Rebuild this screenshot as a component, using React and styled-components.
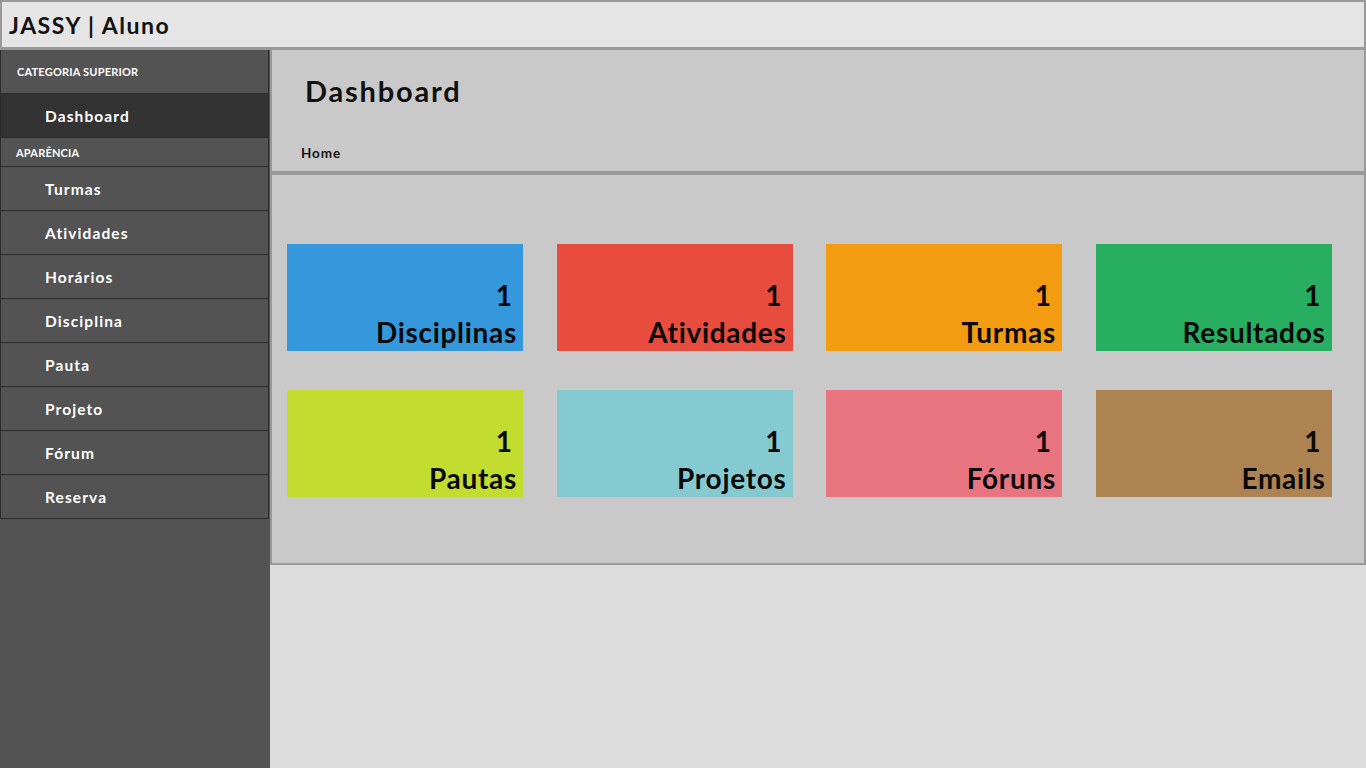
import React from 'react';
import styled, { createGlobalStyle } from 'styled-components';

const GlobalStyle = createGlobalStyle`
  html, body {
    margin: 0;
    padding: 0;
    height: 100%;
  }
  body {
    font-family: Lato, "Open Sans", "Liberation Sans", sans-serif;
    background: #dcdcdc;
  }
  * {
    box-sizing: border-box;
  }
`;

const menu = ['Turmas', 'Atividades', 'Horários', 'Disciplina', 'Pauta', 'Projeto', 'Fórum', 'Reserva'];

const cards = [
  { label: 'Disciplinas', color: '#3598dc' },
  { label: 'Atividades', color: '#e74c3e' },
  { label: 'Turmas', color: '#f39c12' },
  { label: 'Resultados', color: '#27ae61' },
  { label: 'Pautas', color: '#c2dc30' },
  { label: 'Projetos', color: '#85cad1' },
  { label: 'Fóruns', color: '#e87480' },
  { label: 'Emails', color: '#ae8352' },
];

const Page = styled.div`
  display: flex;
  flex-direction: column;
  width: 1366px;
  height: 768px;
  overflow: hidden;
`;

const TopBar = styled.header`
  height: 50px;
  flex-shrink: 0;
  background: #e5e5e5;
  border: 2px solid #999;
  border-bottom-width: 3px;
  display: flex;
  align-items: center;
  padding-left: 7px;
  font-size: 23px;
  font-weight: 700;
  color: #111;
  letter-spacing: 1.5px;
`;

const Body = styled.div`
  flex: 1;
  display: flex;
  min-height: 0;
`;

const Sidebar = styled.nav`
  width: 270px;
  flex-shrink: 0;
  background: #535353;
  display: flex;
  flex-direction: column;
`;

const Category = styled.div`
  width: 269px;
  height: ${(p) => p.$h}px;
  display: flex;
  align-items: center;
  padding-left: ${(p) => p.$pad}px;
  border: 1px solid #2b2b2b;
  border-top: none;
  color: #fff;
  font-size: 11px;
  font-weight: 700;
  letter-spacing: 0.2px;
  text-transform: uppercase;
`;

const Item = styled.div`
  width: 269px;
  height: 44px;
  display: flex;
  align-items: center;
  padding-left: 44px;
  background: ${(p) => (p.$active ? '#333' : '#535353')};
  border: 1px solid #2b2b2b;
  border-top: none;
  color: #fff;
  font-size: 15.5px;
  font-weight: 700;
  letter-spacing: 1.1px;
`;

const Main = styled.main`
  flex: 1;
  display: flex;
  flex-direction: column;
  background: #dcdcdc;
`;

const Header = styled.section`
  height: 125px;
  background: #c9c9c9;
  border: 2px solid #999;
  border-top: none;
  border-bottom-width: 4px;
  display: flex;
  flex-direction: column;
`;

const Title = styled.h1`
  margin: 0;
  padding: 23px 0 0 33px;
  font-size: 29px;
  font-weight: 700;
  letter-spacing: 1.8px;
  color: #111;
  height: 80px;
`;

const Crumb = styled.div`
  padding-left: 29px;
  margin-top: 15px;
  font-size: 13.5px;
  font-weight: 700;
  letter-spacing: 0.9px;
  color: #111;
`;

const Content = styled.section`
  height: 390px;
  background: #c9c9c9;
  border: 2px solid #999;
  border-top: none;
  padding: 69px 0 0 15px;
  display: grid;
  grid-template-columns: repeat(4, 236px);
  grid-auto-rows: 107px;
  column-gap: 33.5px;
  row-gap: 39px;
  align-content: start;
`;

const Card = styled.div`
  background: ${(p) => p.$color};
  display: flex;
  flex-direction: column;
  justify-content: flex-end;
  align-items: flex-end;
  color: #0a0a0a;
  font-weight: 700;
`;

const Count = styled.span`
  font-size: 28px;
  line-height: 36px;
  margin-right: 11px;
`;

const Label = styled.span`
  font-size: 28px;
  line-height: 38px;
  letter-spacing: 0.7px;
  margin-right: 6px;
`;

export default function App() {
  return (
    <Page>
      <GlobalStyle />
      <TopBar>JASSY | Aluno</TopBar>
      <Body>
        <Sidebar>
          <Category $h={44} $pad={16}>Categoria Superior</Category>
          <Item $active>Dashboard</Item>
          <Category $h={29} $pad={15}>Aparência</Category>
          {menu.map((m) => (
            <Item key={m}>{m}</Item>
          ))}
        </Sidebar>
        <Main>
          <Header>
            <Title>Dashboard</Title>
            <Crumb>Home</Crumb>
          </Header>
          <Content>
            {cards.map((c) => (
              <Card key={c.label} $color={c.color}>
                <Count>1</Count>
                <Label>{c.label}</Label>
              </Card>
            ))}
          </Content>
        </Main>
      </Body>
    </Page>
  );
}
